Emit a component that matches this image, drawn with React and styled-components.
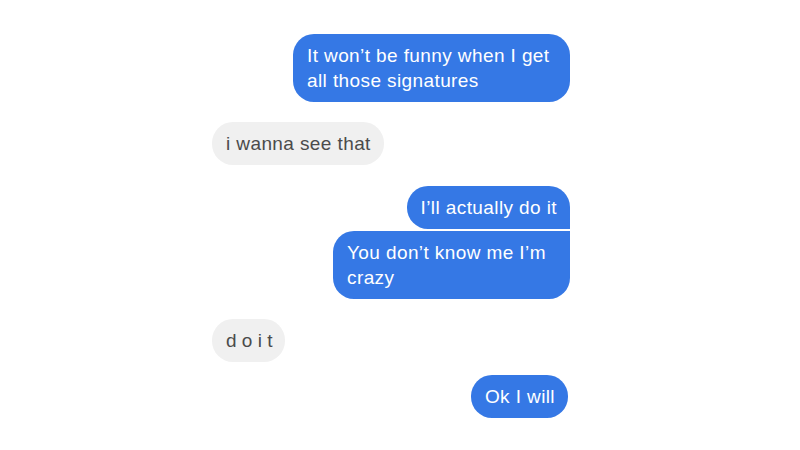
import React from "react";
import styled, { createGlobalStyle } from "styled-components";

const GlobalStyle = createGlobalStyle`
  body {
    margin: 0;
    background: #fff;
    font-family: "Liberation Sans", Arial, sans-serif;
  }
`;

const Page = styled.div`
  display: flex;
  justify-content: center;
  padding: 34px 18px 0 0;
`;

const Thread = styled.div`
  width: 358px;
  display: flex;
  flex-direction: column;
`;

const Row = styled.div`
  display: flex;
  justify-content: ${(props) => (props.mine ? "flex-end" : "flex-start")};
  margin-top: ${(props) => props.gap || 0}px;
  padding-right: ${(props) => props.inset || 0}px;
`;

const Bubble = styled.div`
  box-sizing: border-box;
  max-width: ${(props) => props.max || 237}px;
  padding: 9px 13px 9px 14px;
  font-size: 19px;
  line-height: 25px;
  border-radius: ${(props) => props.radius || "21px"};
  background: ${(props) => (props.mine ? "#3578e5" : "#f0f0f0")};
  color: ${(props) => (props.mine ? "#fff" : "#4b4b4b")};
  letter-spacing: ${(props) => props.spacing || "0.4px"};
`;

const messages = [
  { mine: true, text: "It won’t be funny when I get all those signatures", gap: 0, max: 277 },
  { mine: false, text: "i wanna see that", gap: 20 },
  { mine: true, text: "I’ll actually do it", gap: 21, radius: "21px 21px 0 21px" },
  { mine: true, text: "You don’t know me I’m crazy", gap: 2, radius: "21px 0 21px 21px" },
  { mine: false, text: "d o i t", gap: 20, spacing: "0" },
  { mine: true, text: "Ok I will", gap: 13, inset: 2 },
];

export default function App() {
  return (
    <>
      <GlobalStyle />
      <Page>
        <Thread>
          {messages.map((m, i) => (
            <Row key={i} mine={m.mine} gap={m.gap} inset={m.inset}>
              <Bubble mine={m.mine} max={m.max} radius={m.radius} spacing={m.spacing}>
                {m.text}
              </Bubble>
            </Row>
          ))}
        </Thread>
      </Page>
    </>
  );
}
